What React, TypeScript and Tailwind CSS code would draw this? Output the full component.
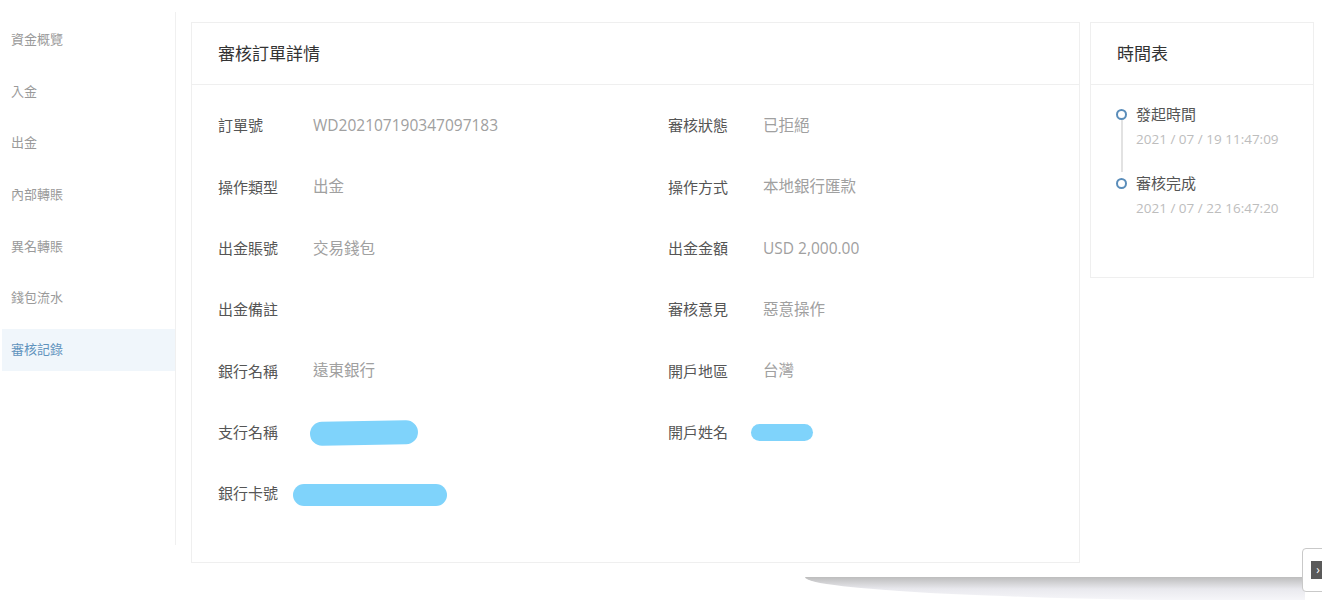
import React from "react";

const font = { fontFamily: '"Open Sans", "Noto Sans CJK TC", sans-serif' };

const menu = ["資金概覽", "入金", "出金", "內部轉賬", "異名轉賬", "錢包流水", "審核記錄"];

function Blur({ w, h, className = "" }: { w: number; h: number; className?: string }) {
  return (
    <span
      className={"inline-block bg-[#7fd3fb] rounded-full " + className}
      style={{ width: w, height: h }}
    />
  );
}

type Cell = { label: string; value?: React.ReactNode };

const rows: [Cell, Cell | null][] = [
  [{ label: "訂單號", value: "WD202107190347097183" }, { label: "審核狀態", value: "已拒絕" }],
  [{ label: "操作類型", value: "出金" }, { label: "操作方式", value: "本地銀行匯款" }],
  [{ label: "出金賬號", value: "交易錢包" }, { label: "出金金額", value: "USD 2,000.00" }],
  [{ label: "出金備註", value: "" }, { label: "審核意見", value: "惡意操作" }],
  [{ label: "銀行名稱", value: "遠東銀行" }, { label: "開戶地區", value: "台灣" }],
  [
    { label: "支行名稱", value: <Blur w={108} h={24} className="-rotate-1 ml-[-3px] mt-[2px]" /> },
    { label: "開戶姓名", value: <Blur w={62} h={17} className="ml-[-12px]" /> },
  ],
  [{ label: "銀行卡號", value: <Blur w={154} h={22} className="ml-[-20px] mt-[2px]" /> }, null],
];

function Item({ c }: { c: Cell | null }) {
  if (!c) return <div />;
  return (
    <div className="flex items-center h-[61.33px]">
      <div className="w-[95px] shrink-0 text-[15px] text-[#555]">{c.label}</div>
      <div className="text-[15.5px] text-[#a0a0a0] flex items-center">{c.value}</div>
    </div>
  );
}

export default function App() {
  return (
    <div className="relative w-[1322px] h-[600px] bg-white overflow-hidden" style={font}>
      <div className="flex items-start">
        {/* Sidebar */}
        <div className="w-[176px] shrink-0 pt-[12px]">
          <div className="h-[533px] border-r border-[#f0f0f0] pt-[7px] pl-[2px] flex flex-col gap-[9.6px]">
            {menu.map((m, i) => (
              <div
                key={m}
                className={
                  "h-[42px] flex items-center pl-[9px] text-[13px] " +
                  (i === 6 ? "bg-[#f0f6fb] text-[#5f93bd]" : "text-[#9a9a9a]")
                }
              >
                {m}
              </div>
            ))}
          </div>
        </div>

        {/* Main card */}
        <div className="ml-[15px] mt-[22px] w-[889px] h-[541px] border border-[#efefef] bg-white">
          <div className="h-[62px] border-b border-[#efefef] flex items-center pl-[26px] text-[17px] text-[#333]">
            審核訂單詳情
          </div>
          <div className="pl-[26px] pt-[10px] grid grid-cols-[450px_1fr]">
            {rows.map(([a, b], i) => (
              <React.Fragment key={i}>
                <Item c={a} />
                <Item c={b} />
              </React.Fragment>
            ))}
          </div>
        </div>

        {/* Timeline card */}
        <div className="ml-[10px] mt-[22px] w-[224px] h-[256px] border border-[#efefef] bg-white">
          <div className="h-[62px] border-b border-[#efefef] flex items-center pl-[26px] text-[17px] text-[#333]">
            時間表
          </div>
          <div className="pl-[25px] pt-[18px]">
            <div className="flex">
              <div className="flex flex-col items-center w-[11px] mr-[9px]">
                <div className="w-[11px] h-[11px] rounded-full border-[2.5px] border-[#5a8dba] mt-[6px]" />
                <div className="w-[2px] flex-1 bg-[#e2e2e2]" />
              </div>
              <div className="pb-[23px]">
                <div className="text-[15px] text-[#555] leading-[22px]">發起時間</div>
                <div className="text-[13.5px] text-[#bdbdbd] leading-[20px] mt-[4px]">2021 / 07 / 19 11:47:09</div>
              </div>
            </div>
            <div className="flex">
              <div className="flex flex-col items-center w-[11px] mr-[9px]">
                <div className="w-[11px] h-[11px] rounded-full border-[2.5px] border-[#5a8dba] mt-[6px]" />
              </div>
              <div>
                <div className="text-[15px] text-[#555] leading-[22px]">審核完成</div>
                <div className="text-[13.5px] text-[#bdbdbd] leading-[20px] mt-[4px]">2021 / 07 / 22 16:47:20</div>
              </div>
            </div>
          </div>
        </div>
      </div>

      {/* page curl shadow overlay */}
      <div className="absolute left-[805px] top-[577px] w-[500px] h-[24px] rounded-bl-[100%_100%] bg-gradient-to-b from-[#bdbdbd] via-[#e9e9ee] to-[#f7f7fa]" />
      {/* floating tab */}
      <div className="absolute left-[1302px] top-[548px] w-[30px] h-[44px] border border-[#c9c9c9] rounded-[4px] bg-white flex items-center pl-[8px]">
        <div className="w-[14px] h-[18px] bg-[#5a5a5a] flex items-center justify-center text-white text-[12px] leading-none">
          ›
        </div>
      </div>
    </div>
  );
}
